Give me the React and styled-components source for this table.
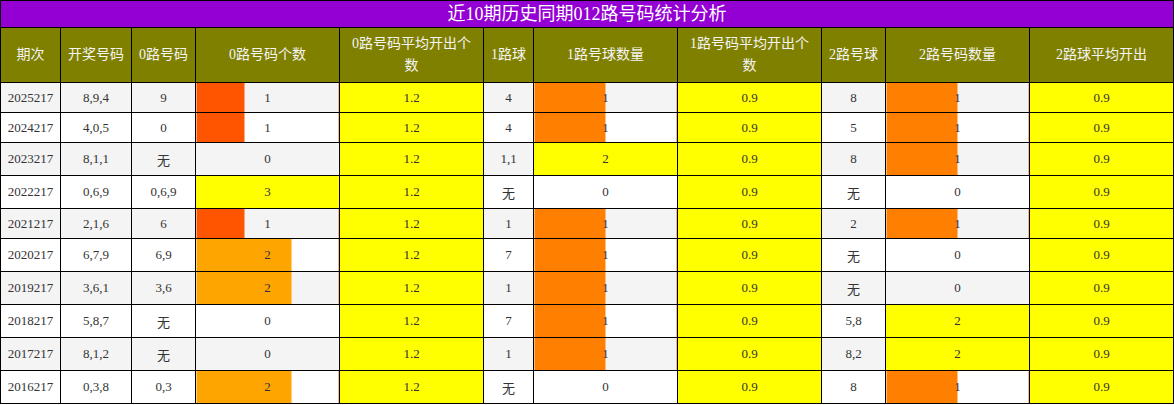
import React from "react";
import styled, { createGlobalStyle } from "styled-components";

const Global = createGlobalStyle`
  html, body { margin: 0; padding: 0; background: #fff; }
  body { font-family: "Liberation Serif", "Noto Sans CJK SC", serif; }
`;

const Table = styled.table`
  border-collapse: collapse;
  width: 1174px;
  table-layout: fixed;
  font-family: "Liberation Serif", "Noto Sans CJK SC", serif;
`;

const TitleCell = styled.th`
  background: #9400d3;
  color: #fff;
  font-size: 18px;
  font-weight: normal;
  height: 26px;
  padding: 0;
  border: 1px solid #000;
  line-height: 26px;
`;

const HeadCell = styled.th`
  background: #808000;
  color: #f4f4f4;
  font-size: 14px;
  font-weight: normal;
  height: 54px;
  padding: 0 6px;
  border: 1px solid #000;
  line-height: 22px;
  text-align: center;
`;

const Row = styled.tr`
  background: ${(p) => (p.$odd ? "#f4f4f4" : "#ffffff")};
  height: ${(p) => (p.$tall ? "33px" : "30px")};
`;

const Cell = styled.td`
  border: 1px solid #000;
  padding: 0;
  font-size: 13px;
  color: #333;
  text-align: center;
  background: ${(p) => (p.$yellow ? "#ffff00" : "transparent")};
`;

const BarCell = styled.td`
  border: 1px solid #000;
  padding: 0;
  font-size: 13px;
  color: #333;
  text-align: center;
  background: ${(p) =>
    p.$pct >= 100
      ? p.$color
      : p.$pct > 0
      ? `linear-gradient(to right, ${p.$color} ${p.$pct}%, transparent ${p.$pct}%)`
      : "transparent"};
  box-shadow: ${(p) =>
    p.$pct > 0 && p.$pct < 100 ? "inset -1px 0 0 #f7b58c" : "none"};
`;

const cols = [60, 71, 64, 144, 144, 50, 144, 144, 64, 144, 144];

const headers = [
  "期次",
  "开奖号码",
  "0路号码",
  "0路号码个数",
  "0路号码平均开出个数",
  "1路球",
  "1路号球数量",
  "1路号码平均开出个数",
  "2路号球",
  "2路号码数量",
  "2路球平均开出",
];

const rows = [
  ["2025217", "8,9,4", "9", 1, "1.2", "4", 1, "0.9", "8", 1, "0.9"],
  ["2024217", "4,0,5", "0", 1, "1.2", "4", 1, "0.9", "5", 1, "0.9"],
  ["2023217", "8,1,1", "无", 0, "1.2", "1,1", 2, "0.9", "8", 1, "0.9"],
  ["2022217", "0,6,9", "0,6,9", 3, "1.2", "无", 0, "0.9", "无", 0, "0.9"],
  ["2021217", "2,1,6", "6", 1, "1.2", "1", 1, "0.9", "2", 1, "0.9"],
  ["2020217", "6,7,9", "6,9", 2, "1.2", "7", 1, "0.9", "无", 0, "0.9"],
  ["2019217", "3,6,1", "3,6", 2, "1.2", "1", 1, "0.9", "无", 0, "0.9"],
  ["2018217", "5,8,7", "无", 0, "1.2", "7", 1, "0.9", "5,8", 2, "0.9"],
  ["2017217", "8,1,2", "无", 0, "1.2", "1", 1, "0.9", "8,2", 2, "0.9"],
  ["2016217", "0,3,8", "0,3", 2, "1.2", "无", 0, "0.9", "8", 1, "0.9"],
];

const zeroColors = { 1: "#ff5500", 2: "#ffa500", 3: "#ffff00" };
const otherColors = { 1: "#ff8000", 2: "#ffff00" };

function Bar({ n, max, colors }) {
  const pct = n === 0 ? 0 : n >= max ? 100 : (n / max) * 100;
  return (
    <BarCell $pct={pct} $color={colors[n] || "transparent"}>
      {n}
    </BarCell>
  );
}

export default function App() {
  return (
    <>
      <Global />
      <Table>
        <colgroup>
          {cols.map((w, i) => (
            <col key={i} style={{ width: w }} />
          ))}
        </colgroup>
        <thead>
          <tr>
            <TitleCell colSpan={11}>近10期历史同期012路号码统计分析</TitleCell>
          </tr>
          <tr>
            {headers.map((h) => (
              <HeadCell key={h}>{h}</HeadCell>
            ))}
          </tr>
        </thead>
        <tbody>
          {rows.map((r, i) => (
            <Row key={r[0]} $odd={i % 2 === 0} $tall={r.includes("无")}>
              <Cell>{r[0]}</Cell>
              <Cell>{r[1]}</Cell>
              <Cell>{r[2]}</Cell>
              <Bar n={r[3]} max={3} colors={zeroColors} />
              <Cell $yellow>{r[4]}</Cell>
              <Cell>{r[5]}</Cell>
              <Bar n={r[6]} max={2} colors={otherColors} />
              <Cell $yellow>{r[7]}</Cell>
              <Cell>{r[8]}</Cell>
              <Bar n={r[9]} max={2} colors={otherColors} />
              <Cell $yellow>{r[10]}</Cell>
            </Row>
          ))}
        </tbody>
      </Table>
    </>
  );
}
